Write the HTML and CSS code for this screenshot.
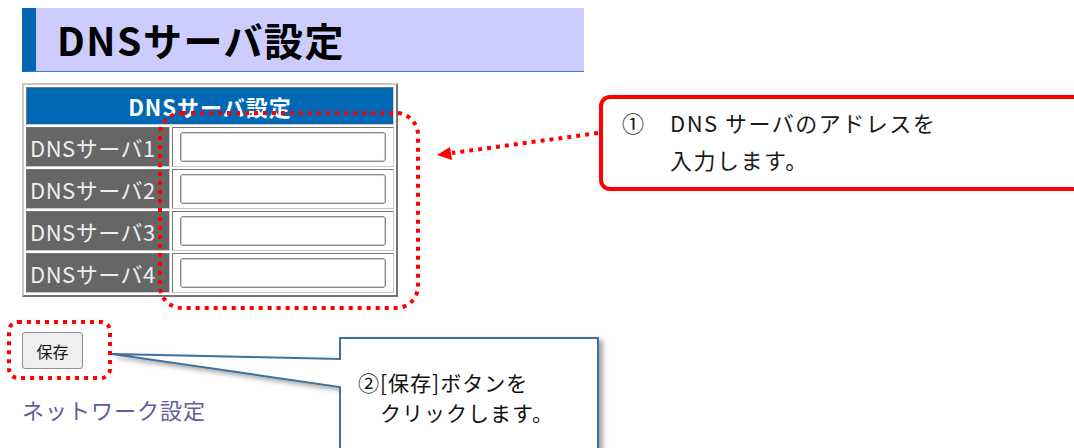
FILE: index.html
```html
<!DOCTYPE html>
<html lang="ja">
<head>
	<meta charset="UTF-8">
	<title>DNSサーバ設定</title>
	<link rel="stylesheet" href="styles.css">
</head>
<body>
	<div id="page">
		<h1 class="title">DNSサーバ設定</h1>
		<table class="dns">
			<colgroup><col class="c1"><col class="c2"></colgroup>
			<tr><th colspan="2">DNSサーバ設定</th></tr>
			<tr><td class="lbl">DNSサーバ1</td><td class="val"><input type="text"></td></tr>
			<tr><td class="lbl">DNSサーバ2</td><td class="val"><input type="text"></td></tr>
			<tr><td class="lbl">DNSサーバ3</td><td class="val"><input type="text"></td></tr>
			<tr><td class="lbl">DNSサーバ4</td><td class="val"><input type="text"></td></tr>
		</table>
		<input type="button" value="保存" class="save">
		<a href="#" class="back">ネットワーク設定</a>
	</div>

	<!-- annotations -->
	<svg class="marks" width="1074" height="448" viewBox="0 0 1074 448">
		<defs>
			<filter id="shadow" x="-10%" y="-10%" width="130%" height="130%">
				<feDropShadow dx="4" dy="3" stdDeviation="2.5" flood-color="#000" flood-opacity="0.35"/>
			</filter>
		</defs>
		<rect x="160" y="113" width="258" height="195" rx="22" class="dots"/>
		<rect x="9" y="322" width="101" height="56" rx="9" class="dots"/>
		<line x1="598" y1="133" x2="452" y2="153" class="dots"/>
		<polygon points="437,155 452,160 450,147" fill="#ff0000"/>
		<rect x="601" y="97" width="500" height="92" rx="9" fill="#fff" stroke="#ff0000" stroke-width="4"/>
		<path d="M340,359 L340,338 L598,338 L598,470 L340,470 L340,387 L112,354 Z" fill="#fff" stroke="#41719c" stroke-width="2" stroke-linejoin="miter" filter="url(#shadow)"/>
	</svg>
	<div class="note1">
		<div><span class="num">①</span>DNS サーバのアドレスを</div>
		<div class="indent">入力します。</div>
	</div>
	<div class="note2">
		<div>②[保存]ボタンを</div>
		<div class="indent">クリックします。</div>
	</div>
</body>
</html>
```

FILE: styles.css
```css
*{
	margin: 0;
	padding: 0;
}
body{
	font-family: "Noto Sans CJK JP", "Noto Sans", sans-serif;
	background: #fff;
	width: 1074px;
	height: 448px;
	overflow: hidden;
	position: relative;
}
#page{
	padding: 8px 0 0 22px;
}
.title{
	box-sizing: border-box;
	width: 562px;
	height: 64px;
	background-color: #ccccff;
	border-left: 14px solid #0066b3;
	border-bottom: 1px solid #3a7cc4;
	padding-left: 21px;
	font-size: 39px;
	letter-spacing: 1.5px;
	font-weight: bold;
	line-height: 62px;
	color: #000;
}
.dns{
	margin-top: 11px;
	border: 2px outset #c8c8c8;
	border-spacing: 2px;
	width: 376px;
	table-layout: fixed;
}
.dns .c1{
	width: 144px;
}
.dns th{
	background-color: #0068b4;
	color: #fff;
	font-size: 22px;
	letter-spacing: 1px;
	font-weight: bold;
	height: 36px;
	border: 1px inset #ccc;
	line-height: 36px;
	padding: 0;
}
.dns td{
	border: 1px inset #c8c8c8;
	height: 38px;
	padding: 0;
}
.dns .lbl{
	background-color: #666;
	color: #eee;
	font-size: 22px;
	letter-spacing: 0.5px;
	white-space: nowrap;
	overflow: visible;
	padding-left: 3px;
	box-sizing: border-box;
}
.dns .val{
	padding-left: 7px;
}
.dns input{
	box-sizing: border-box;
	width: 206px;
	height: 30px;
	border: 1px solid #8a8a8a;
	box-shadow: inset 0 0 0 1px #d0d0d0;
	border-radius: 3px;
	display: block;
}
.save{
	display: block;
	margin-top: 35px;
	width: 61px;
	height: 37px;
	font-family: "Noto Sans CJK JP", sans-serif;
	font-size: 16px;
	background-color: #efefef;
	border: 1px solid #8f8f8f;
	border-radius: 3px;
	color: #111;
}
.back{
	display: inline-block;
	margin-top: 24px;
	font-size: 22px;
	letter-spacing: 1px;
	color: #66599c;
	text-decoration: none;
}
.marks{
	position: absolute;
	left: 0;
	top: 0;
}
.dots{
	fill: none;
	stroke: #ff0000;
	stroke-width: 4;
	stroke-dasharray: 4 5;
}
.note1{
	position: absolute;
	left: 622px;
	top: 104px;
	font-size: 22px;
	letter-spacing: 1.5px;
	line-height: 37px;
	color: #1a1a1a;
}
.note1 .num{
	display: inline-block;
	width: 48px;
}
.note1 .indent{
	padding-left: 48px;
}
.note2{
	position: absolute;
	left: 358px;
	top: 367px;
	font-size: 21px;
	letter-spacing: 1px;
	line-height: 30px;
	color: #111;
}
.note2 .indent{
	padding-left: 22px;
}
```
